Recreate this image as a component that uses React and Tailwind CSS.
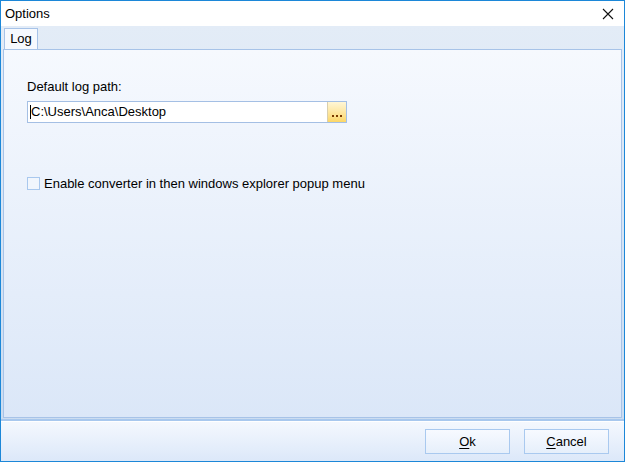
import React from 'react';

const font = { fontFamily: '"Liberation Sans", Arial, sans-serif' };

const DialogButton = ({ mnemonic, rest }) => (
    <button className="w-[85px] h-[25px] border border-[#a9c9ef] bg-gradient-to-b from-[#f7faff] to-[#e6effb] text-[13px] text-black">
        <span className="underline underline-offset-2">{mnemonic}</span>{rest}
    </button>
);

export default function App() {
    return (
        <div className="w-[625px] h-[462px] flex flex-col border border-[#1c87d8] bg-white text-[13px] text-black" style={font}>
            <div className="h-[25px] flex items-center justify-between pl-[4px] pr-[10px] bg-white">
                <span>Options</span>
                <svg width="12" height="12" viewBox="0 0 12 12">
                    <path d="M1 1 L11 11 M11 1 L1 11" stroke="#111" strokeWidth="1.1" />
                </svg>
            </div>

            <div className="flex-1 flex flex-col px-[2px] bg-gradient-to-b from-[#e3ecf7] to-[#c9dbf0]">
                <div className="h-[23px] flex items-end">
                    <div className="ml-[1px] h-[21px] w-[34px] flex items-center justify-center border border-b-0 border-[#a7c3e8] bg-[#f6f9fe]">
                        Log
                    </div>
                </div>

                <div className="h-[369px] flex flex-col border border-[#a7c3e8] bg-gradient-to-b from-[#f6f9fe] to-[#dbe7f8] pl-[23px] pt-[27px]">
                    <div className="mb-[4px]">Default log path:</div>
                    <div className="w-[320px] h-[22px] flex border border-[#a4bfe4] bg-white">
                        <div className="flex-1 flex items-center pl-[2px]">
                            <span className="border-l border-black leading-[14px]">C:\Users\Anca\Desktop</span>
                        </div>
                        <div className="w-[19px] flex items-end justify-center pb-[5px] border-l border-[#d9cfae] bg-gradient-to-b from-[#fff6d6] to-[#fcd766]">
                            <div className="flex gap-[2px]">
                                <span className="w-[2px] h-[2px] bg-[#7a3a00]" />
                                <span className="w-[2px] h-[2px] bg-[#7a3a00]" />
                                <span className="w-[2px] h-[2px] bg-[#7a3a00]" />
                            </div>
                        </div>
                    </div>

                    <label className="mt-[51px] flex items-center gap-[4px]">
                        <span className="w-[13px] h-[13px] border border-[#a9c8ee] bg-[#f1f6fd]" />
                        <span>Enable converter in then windows explorer popup menu</span>
                    </label>
                </div>

                <div className="mt-[1px] h-[2px] bg-[#a8c8ee] -mx-[2px]" />

                <div className="flex-1 -mx-[2px] border-t border-white bg-gradient-to-b from-[#f4f8fe] to-[#dce8f9] flex items-center justify-end gap-[14px] pr-[15px]">
                    <DialogButton mnemonic="O" rest="k" />
                    <DialogButton mnemonic="C" rest="ancel" />
                </div>
            </div>
        </div>
    );
}
